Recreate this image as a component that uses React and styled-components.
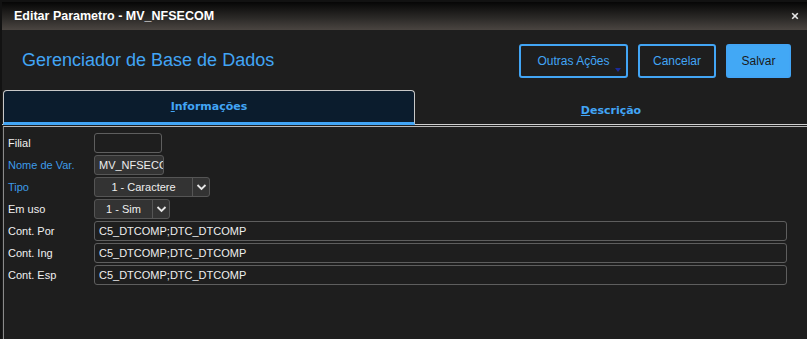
import React from 'react'
import styled, { createGlobalStyle } from 'styled-components'

const GlobalStyle = createGlobalStyle`
  html, body {
    margin: 0;
    padding: 0;
    background: #121212;
    font-family: "Liberation Sans", Arial, sans-serif;
  }
`

const fields = [
  { label: 'Filial', kind: 'empty', width: 68 },
  { label: 'Nome de Var.', kind: 'filled', width: 70, value: 'MV_NFSECOM', accent: true },
  { label: 'Tipo', kind: 'select', width: 116, value: '1 - Caractere', accent: true },
  { label: 'Em uso', kind: 'select', width: 76, value: '1 - Sim' },
  { label: 'Cont. Por', kind: 'wide', value: 'C5_DTCOMP;DTC_DTCOMP' },
  { label: 'Cont. Ing', kind: 'wide', value: 'C5_DTCOMP;DTC_DTCOMP' },
  { label: 'Cont. Esp', kind: 'wide', value: 'C5_DTCOMP;DTC_DTCOMP' },
]

export default function App() {
  return (
    <>
      <GlobalStyle />
      <Page>
        <Dialog>
          <TitleBar>
            <span>Editar Parametro - MV_NFSECOM</span>
            <CloseIcon viewBox="0 0 10 10">
              <path d="M1.5 1.5 L8.5 8.5 M8.5 1.5 L1.5 8.5" />
            </CloseIcon>
          </TitleBar>

          <Header>
            <Heading>Gerenciador de Base de Dados</Heading>
            <Actions>
              <Button $outline>
                Outras Ações
                <Caret />
              </Button>
              <Button $outline $w={78}>Cancelar</Button>
              <Button $w={65}>Salvar</Button>
            </Actions>
          </Header>

          <Tabs>
            <Tab $active>
              <u>I</u>nformações
            </Tab>
            <Tab>
              <u>D</u>escrição
            </Tab>
          </Tabs>

          <Panel>
            {fields.map((f, i) => (
              <Row key={i}>
                <Label $accent={f.accent}>{f.label}</Label>
                {f.kind === 'empty' && <Input $w={f.width} />}
                {f.kind === 'filled' && (
                  <Input $w={f.width} $filled>
                    {f.value}
                  </Input>
                )}
                {f.kind === 'select' && (
                  <Select $w={f.width}>
                    <SelectValue>{f.value}</SelectValue>
                    <SelectArrow>
                      <svg width="11" height="8" viewBox="0 0 11 8">
                        <path d="M1.5 2 L5.5 6 L9.5 2" fill="none" stroke="#e6e6e6" strokeWidth="1.8" />
                      </svg>
                    </SelectArrow>
                  </Select>
                )}
                {f.kind === 'wide' && <Input $wide>{f.value}</Input>}
              </Row>
            ))}
          </Panel>
        </Dialog>
      </Page>
    </>
  )
}

// Styled Components
const Page = styled.div`
  width: 807px;
  height: 339px;
  overflow: hidden;
  padding: 2px 0 0 2px;
  box-sizing: border-box;
  background: #121212;
`

const Dialog = styled.div`
  width: 805px;
  height: 337px;
  background: #1e1e1e;
  display: flex;
  flex-direction: column;
`

const TitleBar = styled.div`
  height: 28px;
  flex-shrink: 0;
  display: flex;
  align-items: center;
  justify-content: space-between;
  padding: 0 8px 0 12px;
  background: linear-gradient(#060606, #2a2826 55%, #4a4541);
  color: #fff;
  font-weight: bold;
  font-size: 12.5px;
`

const CloseIcon = styled.svg`
  width: 8px;
  height: 8px;
  stroke: #e8e8e8;
  stroke-width: 2;
`

const Header = styled.div`
  height: 60px;
  display: flex;
  align-items: center;
  justify-content: space-between;
  padding: 0 16px 0 20px;
`

const Heading = styled.h1`
  margin: 0;
  font-weight: normal;
  font-size: 18px;
  color: #42a5f5;
`

const Actions = styled.div`
  display: flex;
  gap: 10px;
  margin-top: 2px;
`

const Button = styled.button`
  position: relative;
  height: 34px;
  width: ${(p) => p.$w || 109}px;
  border-radius: 3px;
  font-family: "Liberation Sans", Arial, sans-serif;
  font-size: 12px;
  border: 2px solid #42a5f5;
  background: ${(p) => (p.$outline ? '#1e1e1e' : '#42a8f5')};
  color: ${(p) => (p.$outline ? '#42a5f5' : '#1a1a1a')};
  padding: 0;
`

const Caret = styled.span`
  position: absolute;
  right: 5px;
  bottom: 4px;
  border-left: 3.5px solid transparent;
  border-right: 3.5px solid transparent;
  border-top: 4px solid #1a2a9a;
`

const Tabs = styled.div`
  display: flex;
  height: 34px;
  border-bottom: 1px solid #cfcfcf;
  padding-left: 1px;
`

const Tab = styled.div`
  box-sizing: border-box;
  flex: ${(p) => (p.$active ? '0 0 412px' : '1')};
  display: flex;
  align-items: center;
  justify-content: center;
  font-family: "DejaVu Sans", Verdana, sans-serif;
  font-weight: bold;
  font-size: 11px;
  color: #42a5f5;
  padding-top: ${(p) => (p.$active ? '0' : '6px')};
  background: ${(p) => (p.$active ? '#0b1c2d' : 'transparent')};
  border: ${(p) => (p.$active ? '1px solid #c8c8c8' : 'none')};
  border-bottom: ${(p) => (p.$active ? '3px solid #42a5f5' : 'none')};
  border-radius: 4px 4px 0 0;
  margin-bottom: ${(p) => (p.$active ? '-1px' : '0')};

  u {
    text-decoration-thickness: 1px;
  }
`

const Panel = styled.div`
  flex: 1;
  margin: 1px 0 0 1px;
  border-top: 1px solid #b8b8b8;
  border-left: 1px solid #8a8a8a;
  padding: 6px 20px 0 4px;
  display: flex;
  flex-direction: column;
  gap: 2px;
`

const Row = styled.div`
  display: flex;
  align-items: center;
  height: 20px;
`

const Label = styled.div`
  width: 86px;
  flex-shrink: 0;
  font-size: 11px;
  color: ${(p) => (p.$accent ? '#3d9be8' : '#f0f0f0')};
`

const Input = styled.div`
  box-sizing: border-box;
  height: 20px;
  width: ${(p) => (p.$wide ? 'auto' : `${p.$w}px`)};
  flex: ${(p) => (p.$wide ? '1' : '0 0 auto')};
  border: 1px solid ${(p) => (p.$filled ? '#575757' : '#5e5e5e')};
  border-radius: 3px;
  background: ${(p) => (p.$filled ? '#333333' : '#1e1e1e')};
  color: #eeeeee;
  font-size: 11px;
  line-height: 18px;
  padding-left: 4px;
  white-space: nowrap;
  overflow: hidden;
`

const Select = styled.div`
  box-sizing: border-box;
  height: 20px;
  width: ${(p) => p.$w}px;
  display: flex;
  border: 1px solid #555;
  border-radius: 3px;
  background: #333333;
  color: #eeeeee;
  font-size: 11px;
`

const SelectValue = styled.div`
  flex: 1;
  text-align: center;
  line-height: 18px;
`

const SelectArrow = styled.div`
  width: 16px;
  border-left: 1px solid #555;
  display: flex;
  align-items: center;
  justify-content: center;
`
